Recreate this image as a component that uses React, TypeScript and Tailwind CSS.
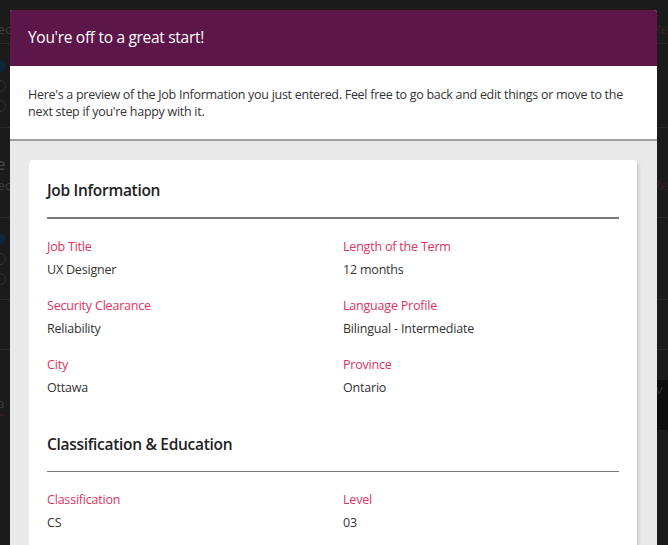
import React from "react";

const font = { fontFamily: '"Open Sans", "Noto Sans", sans-serif' };

function Field({ label, value }: { label: string; value: string }) {
  return (
    <div className="flex flex-col gap-[5px]">
      <div className="text-[12.5px] leading-[18px] tracking-[-0.2px] text-[#dd3360]">{label}</div>
      <div className="text-[12.5px] leading-[18px] tracking-[-0.2px] text-[#333333]">{value}</div>
    </div>
  );
}

function Section({
  title,
  rows,
}: {
  title: string;
  rows: [string, string][];
}) {
  return (
    <div>
      <h2 className="text-[15.5px] leading-[22px] tracking-[-0.3px] font-semibold text-[#222222]">{title}</h2>
      <div className="mt-[16px] h-[1.5px] bg-[#7a7a7a]" />
      <div className="mt-[19px] grid grid-cols-2 gap-x-[20px] gap-y-[18px]">
        {rows.map(([l, v]) => (
          <Field key={l} label={l} value={v} />
        ))}
      </div>
    </div>
  );
}

export default function App() {
  return (
    <div className="relative w-[668px] h-[545px] overflow-hidden bg-[#1b1b1b]" style={font}>
      {/* background page (dimmed) */}
      <div className="flex flex-col text-[13px] text-[#3b3b3b]">
        <div className="h-[44px] border-b border-[#2a2a2a] flex items-end justify-between pb-[4px]">
          <span className="-ml-[20px]">Select</span>
          <span className="text-[#3a2228] mr-[-8px]">Req</span>
        </div>
        <div className="h-[84px] border-b border-[#2a2a2a] flex flex-col justify-center gap-[8px]">
          <span className="-ml-[6px] w-[12px] h-[12px] rounded-full bg-[#10243a]" />
          <span className="-ml-[6px] w-[12px] h-[12px] rounded-full border border-[#333]" />
          <span className="-ml-[6px] w-[12px] h-[12px] rounded-full border border-[#333]" />
        </div>
        <div className="h-[90px] border-b border-[#2a2a2a] flex flex-col justify-between py-[24px]">
          <span className="-ml-[14px] text-[16px] font-semibold text-[#444]">ne</span>
          <div className="flex justify-between">
            <span className="-ml-[20px]">Select</span>
            <span className="text-[#3a2228] mr-[-8px]">Req</span>
          </div>
        </div>
        <div className="h-[82px] border-b border-[#2a2a2a] flex flex-col justify-center gap-[8px]">
          <span className="-ml-[6px] w-[12px] h-[12px] rounded-full bg-[#10243a]" />
          <span className="-ml-[6px] w-[12px] h-[12px] rounded-full border border-[#333]" />
          <span className="-ml-[6px] w-[12px] h-[12px] rounded-full border border-[#333]" />
        </div>
        <div className="h-[50px] border-b border-[#2a2a2a]" />
        <div className="h-[30px]" />
        <div className="h-[50px] flex items-center justify-between bg-[#1b1b1b]">
          <span className="-ml-[10px] border-b border-[#3a1a20] pb-[2px]">Sa</span>
          <span className="h-full w-[12px] bg-[#0d0d0d] text-[#333]">v</span>
        </div>
      </div>

      {/* modal */}
      <div className="absolute left-[10px] top-[10px] w-[647px] h-[560px] rounded-t-[3px] overflow-hidden bg-[#e9e9e9]">
        <div className="h-[56px] bg-[#5c1649] px-[18px] flex items-center">
          <h1 className="text-[15.5px] tracking-[-0.3px] text-white">You're off to a great start!</h1>
        </div>
        <div className="bg-white px-[18px] pt-[20px] pb-[18px] border-b-2 border-[#a0a0a0] h-[75px]">
          <p className="text-[12.5px] leading-[17px] tracking-[-0.28px] text-[#333333]">
            Here's a preview of the Job Information you just entered. Feel free to go back and edit things or move to the next step if you're happy with it.
          </p>
        </div>
        <div className="pl-[19px] pr-[20px] pt-[19px]">
          <div className="bg-white rounded-[4px] shadow-[2px_2px_3px_rgba(0,0,0,0.12)] px-[18px] pt-[19px] pb-[30px] flex flex-col gap-[36px]">
            <Section
              title="Job Information"
              rows={[
                ["Job Title", "UX Designer"],
                ["Length of the Term", "12 months"],
                ["Security Clearance", "Reliability"],
                ["Language Profile", "Bilingual - Intermediate"],
                ["City", "Ottawa"],
                ["Province", "Ontario"],
              ]}
            />
            <Section
              title="Classification & Education"
              rows={[
                ["Classification", "CS"],
                ["Level", "03"],
              ]}
            />
          </div>
        </div>
      </div>
    </div>
  );
}
